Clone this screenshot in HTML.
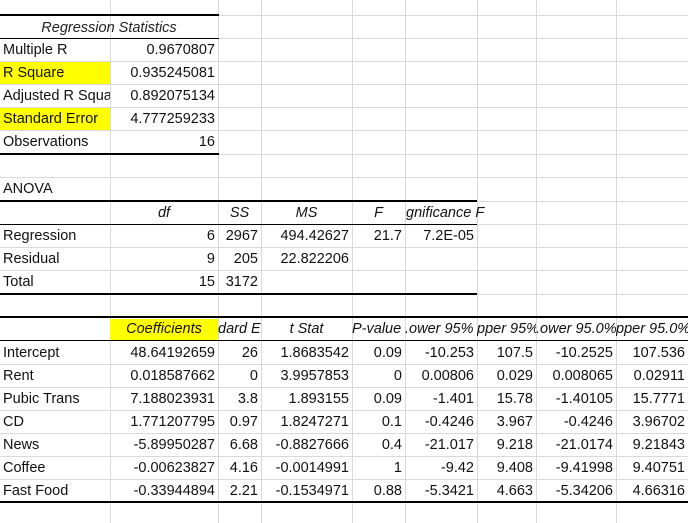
<!DOCTYPE html>
<html><head><meta charset="utf-8"><style>
body{margin:0;width:688px;height:523px;overflow:hidden;background:#fff;position:relative;font-family:"Liberation Sans",sans-serif;font-size:14.5px;color:#111}
.v{position:absolute;top:0;height:523px;width:1px;background:#d9d9d9}
.h{position:absolute;left:0;width:688px;height:1px;background:#d9d9d9}
.k{position:absolute;background:#000}
.c{position:absolute;height:23px;line-height:24px;white-space:nowrap;overflow:hidden;box-sizing:border-box;padding:0 3px}
.r{text-align:right}.m{text-align:center}.i{font-style:italic}
.y{background:#ffff00}
</style></head><body>
<!-- grid -->
<div class="v" style="left:110px"></div><div class="v" style="left:218px"></div><div class="v" style="left:261px"></div><div class="v" style="left:352px"></div><div class="v" style="left:405px"></div><div class="v" style="left:477px"></div><div class="v" style="left:536px"></div><div class="v" style="left:616px"></div>
<div class="h" style="top:15px"></div><div class="h" style="top:38px"></div><div class="h" style="top:61px"></div><div class="h" style="top:84px"></div><div class="h" style="top:107px"></div><div class="h" style="top:130px"></div><div class="h" style="top:154px"></div><div class="h" style="top:177px"></div><div class="h" style="top:201px"></div><div class="h" style="top:224px"></div><div class="h" style="top:247px"></div><div class="h" style="top:270px"></div><div class="h" style="top:294px"></div><div class="h" style="top:317px"></div><div class="h" style="top:340px"></div><div class="h" style="top:364px"></div><div class="h" style="top:387px"></div><div class="h" style="top:410px"></div><div class="h" style="top:433px"></div><div class="h" style="top:456px"></div><div class="h" style="top:479px"></div><div class="h" style="top:502px"></div>
<!-- yellow -->
<div class="c y" style="left:0;top:62px;width:110px;height:22px"></div>
<div class="c y" style="left:0;top:108px;width:110px;height:22px"></div>
<div class="c y" style="left:110px;top:319px;width:108px;height:21px"></div>
<!-- border lines -->
<div class="k" style="left:0;top:14px;width:219px;height:2px"></div>
<div class="k" style="left:0;top:38px;width:219px;height:1px"></div>
<div class="k" style="left:0;top:153px;width:219px;height:2px"></div>
<div class="k" style="left:0;top:200px;width:477px;height:2px"></div>
<div class="k" style="left:0;top:224px;width:477px;height:1px"></div>
<div class="k" style="left:0;top:293px;width:477px;height:2px"></div>
<div class="k" style="left:0;top:316px;width:688px;height:2px"></div>
<div class="k" style="left:0;top:340px;width:688px;height:1px"></div>
<div class="k" style="left:0;top:501px;width:688px;height:2px"></div>
<!-- Regression stats -->
<div class="c m i" style="left:0;top:16px;width:218px;color:#222">Regression Statistics</div>
<div class="c" style="left:0;top:38px;width:110px">Multiple R</div><div class="c r" style="left:110px;top:38px;width:108px">0.9670807</div>
<div class="c" style="left:0;top:61px;width:110px">R Square</div><div class="c r" style="left:110px;top:61px;width:108px">0.935245081</div>
<div class="c" style="left:0;top:84px;width:110px">Adjusted R Square</div><div class="c r" style="left:110px;top:84px;width:108px">0.892075134</div>
<div class="c" style="left:0;top:107px;width:110px">Standard Error</div><div class="c r" style="left:110px;top:107px;width:108px">4.777259233</div>
<div class="c" style="left:0;top:130px;width:110px">Observations</div><div class="c r" style="left:110px;top:130px;width:108px">16</div>
<!-- ANOVA -->
<div class="c" style="left:0;top:177px;width:110px">ANOVA</div>
<div class="c m i" style="left:110px;top:201px;width:108px">df</div>
<div class="c m i" style="left:218px;top:201px;width:43px">SS</div>
<div class="c m i" style="left:261px;top:201px;width:91px">MS</div>
<div class="c m i" style="left:352px;top:201px;width:53px">F</div>
<div class="c i" style="left:405px;top:201px;width:90px;padding-left:1px">gnificance F</div>
<div class="c" style="left:0;top:224px;width:110px">Regression</div><div class="c r" style="left:110px;top:224px;width:108px">6</div><div class="c r" style="left:218px;top:224px;width:43px">2967</div><div class="c r" style="left:261px;top:224px;width:91px">494.42627</div><div class="c r" style="left:352px;top:224px;width:53px">21.7</div><div class="c r" style="left:405px;top:224px;width:72px">7.2E-05</div>
<div class="c" style="left:0;top:247px;width:110px">Residual</div><div class="c r" style="left:110px;top:247px;width:108px">9</div><div class="c r" style="left:218px;top:247px;width:43px">205</div><div class="c r" style="left:261px;top:247px;width:91px">22.822206</div>
<div class="c" style="left:0;top:270px;width:110px">Total</div><div class="c r" style="left:110px;top:270px;width:108px">15</div><div class="c r" style="left:218px;top:270px;width:43px">3172</div>
<!-- Coefficients -->
<div class="c m i" style="left:110px;top:317px;width:108px">Coefficients</div>
<div class="c i" style="left:218px;top:317px;width:43px;padding-left:0">dard E</div>
<div class="c m i" style="left:261px;top:317px;width:91px">t Stat</div>
<div class="c i" style="left:352px;top:317px;width:53px;padding-left:0">P-value</div>
<div class="c i" style="left:405px;top:317px;width:72px;padding-left:0">.ower 95%</div>
<div class="c i" style="left:477px;top:317px;width:59px;padding-left:0">pper 95%</div>
<div class="c i" style="left:536px;top:317px;width:80px;padding-left:0">.ower 95.0%</div>
<div class="c i" style="left:616px;top:317px;width:72px;padding-left:0">pper 95.0%</div>
<div class="c" style="left:0;top:341px;width:110px">Intercept</div><div class="c r" style="left:110px;top:341px;width:108px">48.64192659</div><div class="c r" style="left:218px;top:341px;width:43px">26</div><div class="c r" style="left:261px;top:341px;width:91px">1.8683542</div><div class="c r" style="left:352px;top:341px;width:53px">0.09</div><div class="c r" style="left:405px;top:341px;width:72px">-10.253</div><div class="c r" style="left:477px;top:341px;width:59px">107.5</div><div class="c r" style="left:536px;top:341px;width:80px">-10.2525</div><div class="c r" style="left:616px;top:341px;width:72px">107.536</div>
<div class="c" style="left:0;top:364px;width:110px">Rent</div><div class="c r" style="left:110px;top:364px;width:108px">0.018587662</div><div class="c r" style="left:218px;top:364px;width:43px">0</div><div class="c r" style="left:261px;top:364px;width:91px">3.9957853</div><div class="c r" style="left:352px;top:364px;width:53px">0</div><div class="c r" style="left:405px;top:364px;width:72px">0.00806</div><div class="c r" style="left:477px;top:364px;width:59px">0.029</div><div class="c r" style="left:536px;top:364px;width:80px">0.008065</div><div class="c r" style="left:616px;top:364px;width:72px">0.02911</div>
<div class="c" style="left:0;top:387px;width:110px">Pubic Trans</div><div class="c r" style="left:110px;top:387px;width:108px">7.188023931</div><div class="c r" style="left:218px;top:387px;width:43px">3.8</div><div class="c r" style="left:261px;top:387px;width:91px">1.893155</div><div class="c r" style="left:352px;top:387px;width:53px">0.09</div><div class="c r" style="left:405px;top:387px;width:72px">-1.401</div><div class="c r" style="left:477px;top:387px;width:59px">15.78</div><div class="c r" style="left:536px;top:387px;width:80px">-1.40105</div><div class="c r" style="left:616px;top:387px;width:72px">15.7771</div>
<div class="c" style="left:0;top:410px;width:110px">CD</div><div class="c r" style="left:110px;top:410px;width:108px">1.771207795</div><div class="c r" style="left:218px;top:410px;width:43px">0.97</div><div class="c r" style="left:261px;top:410px;width:91px">1.8247271</div><div class="c r" style="left:352px;top:410px;width:53px">0.1</div><div class="c r" style="left:405px;top:410px;width:72px">-0.4246</div><div class="c r" style="left:477px;top:410px;width:59px">3.967</div><div class="c r" style="left:536px;top:410px;width:80px">-0.4246</div><div class="c r" style="left:616px;top:410px;width:72px">3.96702</div>
<div class="c" style="left:0;top:433px;width:110px">News</div><div class="c r" style="left:110px;top:433px;width:108px">-5.89950287</div><div class="c r" style="left:218px;top:433px;width:43px">6.68</div><div class="c r" style="left:261px;top:433px;width:91px">-0.8827666</div><div class="c r" style="left:352px;top:433px;width:53px">0.4</div><div class="c r" style="left:405px;top:433px;width:72px">-21.017</div><div class="c r" style="left:477px;top:433px;width:59px">9.218</div><div class="c r" style="left:536px;top:433px;width:80px">-21.0174</div><div class="c r" style="left:616px;top:433px;width:72px">9.21843</div>
<div class="c" style="left:0;top:456px;width:110px">Coffee</div><div class="c r" style="left:110px;top:456px;width:108px">-0.00623827</div><div class="c r" style="left:218px;top:456px;width:43px">4.16</div><div class="c r" style="left:261px;top:456px;width:91px">-0.0014991</div><div class="c r" style="left:352px;top:456px;width:53px">1</div><div class="c r" style="left:405px;top:456px;width:72px">-9.42</div><div class="c r" style="left:477px;top:456px;width:59px">9.408</div><div class="c r" style="left:536px;top:456px;width:80px">-9.41998</div><div class="c r" style="left:616px;top:456px;width:72px">9.40751</div>
<div class="c" style="left:0;top:479px;width:110px">Fast Food</div><div class="c r" style="left:110px;top:479px;width:108px">-0.33944894</div><div class="c r" style="left:218px;top:479px;width:43px">2.21</div><div class="c r" style="left:261px;top:479px;width:91px">-0.1534971</div><div class="c r" style="left:352px;top:479px;width:53px">0.88</div><div class="c r" style="left:405px;top:479px;width:72px">-5.3421</div><div class="c r" style="left:477px;top:479px;width:59px">4.663</div><div class="c r" style="left:536px;top:479px;width:80px">-5.34206</div><div class="c r" style="left:616px;top:479px;width:72px">4.66316</div>
</body></html>
